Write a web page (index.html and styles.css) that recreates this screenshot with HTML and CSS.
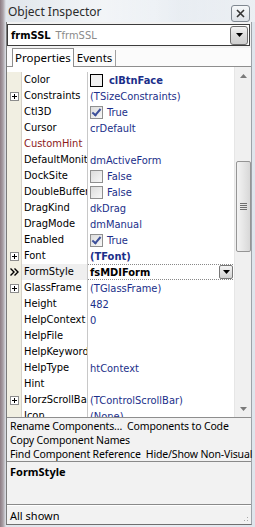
FILE: index.html
```html
<!DOCTYPE html>
<html lang="en">
<head>
    <meta charset="UTF-8">
    <title>Object Inspector</title>
    <link rel="stylesheet" href="styles.css">
</head>
<body>
    <div class="window">
        <div class="titlebar">
            <span class="title">Object Inspector</span>
            <span class="close">
                <svg width="9" height="9" viewBox="0 0 9 9"><path d="M1 1 L8 8 M8 1 L1 8" stroke="#333" stroke-width="1.6"/></svg>
            </span>
        </div>

        <div class="frame">
            <div class="combo">
                <span class="obj-name">frmSSL</span>
                <span class="obj-type">TfrmSSL</span>
                <span class="combo-btn"><svg width="7" height="4" viewBox="0 0 7 4"><path d="M0 0 H7 L3.5 4 Z" fill="#000"/></svg></span>
            </div>

            <div class="tabs">
                <div class="tab active">Properties</div>
                <div class="tab">Events</div>
            </div>

            <div class="grid">
                <div class="rows">
                    <div class="row"><span class="gut"></span><span class="name">Color</span><span class="val strong"><i class="swatch"></i>clBtnFace</span></div>
                    <div class="row"><span class="gut"><i class="plus"></i></span><span class="name">Constraints</span><span class="val">(TSizeConstraints)</span></div>
                    <div class="row"><span class="gut"></span><span class="name">Ctl3D</span><span class="val"><i class="check on"></i>True</span></div>
                    <div class="row"><span class="gut"></span><span class="name">Cursor</span><span class="val">crDefault</span></div>
                    <div class="row"><span class="gut"></span><span class="name event">CustomHint</span><span class="val"></span></div>
                    <div class="row"><span class="gut"></span><span class="name">DefaultMonitor</span><span class="val">dmActiveForm</span></div>
                    <div class="row"><span class="gut"></span><span class="name">DockSite</span><span class="val"><i class="check"></i>False</span></div>
                    <div class="row"><span class="gut"></span><span class="name">DoubleBuffered</span><span class="val"><i class="check"></i>False</span></div>
                    <div class="row"><span class="gut"></span><span class="name">DragKind</span><span class="val">dkDrag</span></div>
                    <div class="row"><span class="gut"></span><span class="name">DragMode</span><span class="val">dmManual</span></div>
                    <div class="row"><span class="gut"></span><span class="name">Enabled</span><span class="val"><i class="check on"></i>True</span></div>
                    <div class="row"><span class="gut"><i class="plus"></i></span><span class="name">Font</span><span class="val strong">(TFont)</span></div>
                    <div class="row selected"><span class="gut"><svg width="9" height="8" viewBox="0 0 9 8"><path d="M0.5 0.5 L4 4 L0.5 7.5 M4.5 0.5 L8 4 L4.5 7.5" stroke="#000" stroke-width="1.4" fill="none"/></svg></span><span class="name">FormStyle</span><span class="val edit">fsMDIForm<span class="mini-btn"><svg width="7" height="4" viewBox="0 0 7 4"><path d="M0 0 H7 L3.5 4 Z" fill="#000"/></svg></span></span></div>
                    <div class="row"><span class="gut"><i class="plus"></i></span><span class="name">GlassFrame</span><span class="val">(TGlassFrame)</span></div>
                    <div class="row"><span class="gut"></span><span class="name">Height</span><span class="val">482</span></div>
                    <div class="row"><span class="gut"></span><span class="name">HelpContext</span><span class="val">0</span></div>
                    <div class="row"><span class="gut"></span><span class="name">HelpFile</span><span class="val"></span></div>
                    <div class="row"><span class="gut"></span><span class="name">HelpKeyword</span><span class="val"></span></div>
                    <div class="row"><span class="gut"></span><span class="name">HelpType</span><span class="val">htContext</span></div>
                    <div class="row"><span class="gut"></span><span class="name">Hint</span><span class="val"></span></div>
                    <div class="row"><span class="gut"><i class="plus"></i></span><span class="name">HorzScrollBar</span><span class="val">(TControlScrollBar)</span></div>
                    <div class="row"><span class="gut"></span><span class="name">Icon</span><span class="val">(None)</span></div>
                </div>
                <div class="scrollbar">
                    <span class="arrow"><svg width="7" height="4" viewBox="0 0 7 4"><path d="M0 4 H7 L3.5 0 Z" fill="#7a7a7a"/></svg></span>
                    <div class="track">
                        <div class="thumb"><span class="grip"></span></div>
                    </div>
                    <span class="arrow"><svg width="7" height="4" viewBox="0 0 7 4"><path d="M0 0 H7 L3.5 4 Z" fill="#7a7a7a"/></svg></span>
                </div>
            </div>

            <div class="commands">
                <div class="cmd-line"><span>Rename Components...</span><span>Components to Code</span></div>
                <div class="cmd-line"><span>Copy Component Names</span></div>
                <div class="cmd-line"><span>Find Component Reference</span><span>Hide/Show Non-Visual</span></div>
            </div>

            <div class="help">FormStyle</div>

            <div class="status">All shown<span class="sizegrip"></span></div>
        </div>
    </div>
</body>
</html>
```

FILE: styles.css
```css
body {
    margin: 0;
    background: #d6dce3;
}
.window {
    width: 255px;
    height: 527px;
    display: flex;
    flex-direction: column;
    background: linear-gradient(to right, #8d7d84 0, #a9a0a6 3px, #dfe4ea 6px, #e9eef3 60%, #dfe5ec 100%);
    overflow: hidden;
}
.titlebar {
    height: 22px;
    flex: none;
    display: flex;
    align-items: center;
    justify-content: space-between;
    padding: 0 5px 0 8px;
    background: linear-gradient(to right, rgba(255,255,255,0) 0, rgba(255,255,255,0.5) 40%, rgba(255,255,255,0.1) 70%, rgba(255,255,255,0.4) 100%);
}
.title {
    font-family: "Noto Sans", "Open Sans", sans-serif;
    font-size: 12px;
    color: #2b2b2b;
    margin-top: 1px;
}
.close {
    width: 17px;
    height: 15px;
    margin-top: 5px;
    border: 1px solid #7f8790;
    border-radius: 3px;
    background: linear-gradient(#f6f8fa, #dde2e7);
    display: flex;
    align-items: center;
    justify-content: center;
}
.frame {
    flex: 1;
    display: flex;
    flex-direction: column;
    margin: 0 3px 2px 6px;
    background: #f2f2f2;
    border-left: 1px solid #7a7a7a;
    border-right: 1px solid #9da3a9;
    border-bottom: 1px solid #6f6f6f;
    font-family: "DejaVu Sans Condensed", "Liberation Sans", sans-serif;
    font-size: 11px;
}
.combo {
    height: 20px;
    margin: 2px 1px 2px 0;
    border: 1px solid #3c3c3c;
    background: #fff;
    display: flex;
    align-items: center;
    padding-left: 3px;
    gap: 5px;
}
.obj-name {
    font-weight: bold;
    color: #000;
}
.obj-type {
    color: #8a8a8a;
}
.combo-btn {
    margin-left: auto;
    margin-right: 1px;
    width: 16px;
    height: 17px;
    border: 1px solid #6e6e6e;
    border-radius: 3px;
    background: linear-gradient(#f4f4f4, #dcdcdc 50%, #cfcfcf);
    display: flex;
    align-items: center;
    justify-content: center;
}
.tabs {
    height: 18px;
    display: flex;
    align-items: flex-end;
    padding-left: 5px;
    background: #fbfbfb;
    border-bottom: 1px solid #8e8e8e;
    font-family: "Noto Sans", "Open Sans", sans-serif;
    font-size: 11.5px;
}
.tab {
    height: 16px;
    line-height: 16px;
    padding: 0 3px;
    border-right: 1px solid #a0a0a0;
    color: #000;
}
.tab.active {
    height: 18px;
    line-height: 17px;
    background: #fff;
    border: 1px solid #8e8e8e;
    border-bottom: none;
    margin-bottom: -1px;
    padding: 0 2px;
}
.grid {
    height: 350px;
    display: flex;
    background: #fff;
    overflow: hidden;
}
.rows {
    flex: 1;
    padding-top: 5px;
    min-width: 0;
}
.row {
    height: 16px;
    display: flex;
    align-items: center;
}
.gut {
    width: 14px;
    height: 16px;
    flex: none;
    background: #f1efe2;
    border-right: 1px solid #d4d0c8;
    display: flex;
    align-items: center;
    justify-content: center;
}
.name {
    width: 63px;
    flex: none;
    padding-left: 2px;
    white-space: nowrap;
    overflow: hidden;
    color: #000;
    height: 16px;
    line-height: 16px;
    border-right: 1px solid #c8c8c8;
}
.name.event {
    color: #8b1a1a;
}
.val {
    flex: 1;
    min-width: 0;
    height: 16px;
    display: flex;
    align-items: center;
    padding-left: 2px;
    white-space: nowrap;
    overflow: hidden;
    color: #1b2f8a;
}
.val.strong {
    font-weight: bold;
}
.selected .name {
    background: #efefef;
}
.val.edit {
    color: #000;
    font-weight: bold;
    border-top: 1px dotted #888;
    border-bottom: 1px dotted #888;
    height: 14px;
    margin-right: 1px;
}
.mini-btn {
    margin-left: auto;
    width: 12px;
    height: 12px;
    border: 1px solid #777;
    border-radius: 2px;
    background: linear-gradient(#f4f4f4, #d2d2d2);
    display: flex;
    align-items: center;
    justify-content: center;
}
.plus {
    width: 7px;
    height: 7px;
    border: 1px solid #8c8c8c;
    background: #fff linear-gradient(#000, #000) center / 5px 1px no-repeat;
    position: relative;
}
.plus::after {
    content: "";
    position: absolute;
    left: 3px;
    top: 1px;
    width: 1px;
    height: 5px;
    background: #000;
}
.swatch {
    width: 11px;
    height: 11px;
    border: 1px solid #000;
    background: #f0f0f0;
    margin-right: 6px;
}
.check {
    width: 11px;
    height: 11px;
    border: 1px solid #8f8f8f;
    background: linear-gradient(135deg, #dcdcdc, #f7f7f7);
    margin-right: 4px;
    position: relative;
}
.check.on::after {
    content: "";
    position: absolute;
    left: 3px;
    top: 0;
    width: 3px;
    height: 7px;
    border: solid #3c4f9a;
    border-width: 0 2px 2px 0;
    transform: rotate(40deg);
}
.scrollbar {
    width: 16px;
    flex: none;
    display: flex;
    flex-direction: column;
    background: #f0f0f0;
    border-left: 1px solid #e6e6e6;
}
.arrow {
    height: 17px;
    display: flex;
    align-items: center;
    justify-content: center;
}
.track {
    flex: 1;
    padding-top: 77px;
}
.thumb {
    height: 89px;
    margin: 0 0 0 1px;
    border: 1px solid #959595;
    border-radius: 2px;
    background: linear-gradient(to right, #f3f3f3, #e6e6e6 50%, #d8d8d8);
    display: flex;
    align-items: center;
    justify-content: center;
}
.grip {
    width: 7px;
    height: 7px;
    background: repeating-linear-gradient(#6e6e6e 0 1px, transparent 1px 2px);
}
.commands {
    height: 42px;
    padding: 1px 0 0 3px;
    border-top: 1px solid #8e8e8e;
    font-family: "Noto Sans", "Open Sans", sans-serif;
    font-size: 10.5px;
    letter-spacing: -0.15px;
    color: #000;
}
.cmd-line {
    height: 14px;
    line-height: 14px;
    display: flex;
    gap: 5px;
    white-space: nowrap;
}
.help {
    height: 40px;
    padding: 2px 0 0 3px;
    border-top: 1px solid #8a8a8a;
    border-bottom: 1px solid #8a8a8a;
    font-family: "Noto Sans", "Open Sans", sans-serif;
    font-size: 11px;
    font-weight: bold;
    color: #000;
}
.status {
    flex: 1;
    display: flex;
    align-items: center;
    padding-left: 3px;
    border-top: 1px solid #fff;
    font-family: "Noto Sans", "Open Sans", sans-serif;
    font-size: 11px;
    color: #000;
}
.sizegrip {
    align-self: flex-end;
    width: 10px;
    height: 10px;
    margin: auto 1px 1px auto;
    background: radial-gradient(circle, #a8a8a8 0.8px, transparent 1px) 0 0 / 3px 3px;
    clip-path: polygon(100% 0, 100% 100%, 0 100%);
}
```
